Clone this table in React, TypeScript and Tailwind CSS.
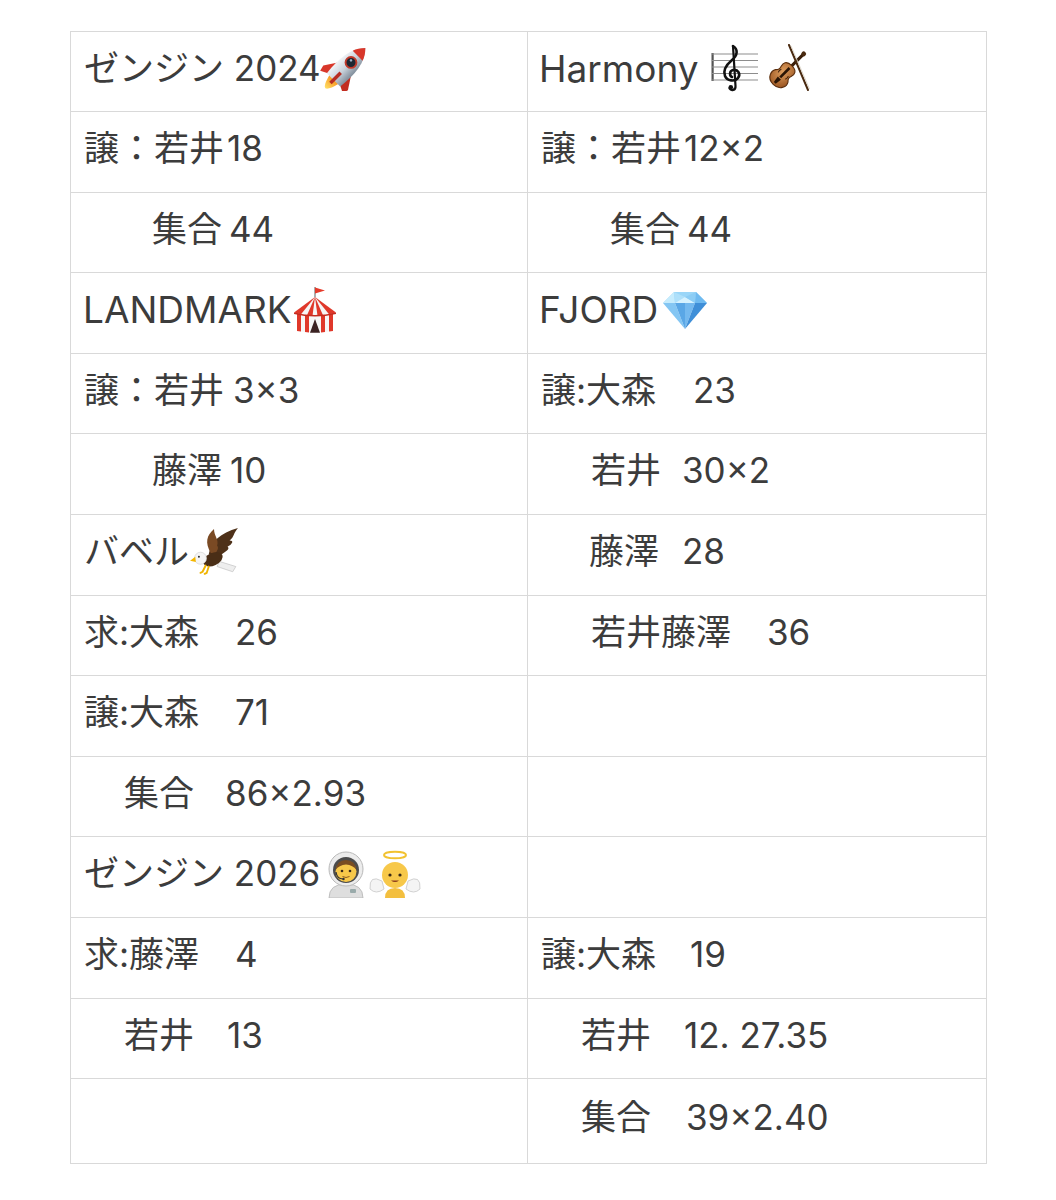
import React from "react";

type Seg = { w?: string; c: React.ReactNode };
type Cell = { pl: string; segs: Seg[] } | null;
type Row = { h: string; l: Cell; r: Cell };

function Rocket() {
  return (
    <svg viewBox="9 7 31 31" className="w-[47px] h-[45px] shrink-0">
      <defs>
        <linearGradient id="rb" x1="0" x2="1" y1="0" y2="0">
          <stop offset="0" stopColor="#f1f4f7" />
          <stop offset="0.5" stopColor="#c9d2db" />
          <stop offset="1" stopColor="#7f8c9a" />
        </linearGradient>
        <linearGradient id="rf" x1="0" x2="0" y1="0" y2="1">
          <stop offset="0" stopColor="#f7941d" />
          <stop offset="1" stopColor="#ffe066" />
        </linearGradient>
      </defs>
      <g transform="rotate(45 24 24)">
        <path d="M19.5 32 Q24 50 28.5 32 Z" fill="url(#rf)" />
        <path d="M18.5 21 L12 31 L13 35 L19 32 Z" fill="#d8372a" />
        <path d="M29.5 21 L36 31 L35 35 L29 32 Z" fill="#c22d21" />
        <path d="M24 2 C31 9 32 20 30.5 33 L17.5 33 C16 20 17 9 24 2 Z" fill="url(#rb)" />
        <path d="M24 2 C26.5 4.5 28 7 28.8 9.5 L19.2 9.5 C20 7 21.5 4.5 24 2 Z" fill="#d8372a" />
        <circle cx="24" cy="16" r="4.4" fill="#c0392b" />
        <circle cx="24" cy="16" r="3.1" fill="#1d2733" />
        <circle cx="23" cy="15" r="0.9" fill="#9fb3c8" />
        <rect x="22.8" y="26" width="2.4" height="10" fill="#b82d22" />
      </g>
    </svg>
  );
}

function Score() {
  return (
    <svg viewBox="0 0 48 48" className="w-[48px] h-[48px] shrink-0">
      <rect x="0.5" y="9" width="2.2" height="28" fill="#555" />
      {[10, 16.5, 23, 29.5, 36].map((y) => (
        <line key={y} x1="1" x2="47" y1={y} y2={y} stroke="#8d8d8d" strokeWidth="1.2" />
      ))}
      <path
        d="M22 2 C27 5 27 11 21 16 C14 22 12 27 14 32 C16 37 24 38 27 34 C30 30 27 25 22 26 C18 27 18.5 32 21 33"
        fill="none"
        stroke="#111"
        strokeWidth="2.6"
        strokeLinecap="round"
      />
      <path d="M22 2 L24.5 42 C25 46.5 20 47 18.5 44.5" fill="none" stroke="#111" strokeWidth="2.2" strokeLinecap="round" />
      <circle cx="19.8" cy="43.2" r="2.3" fill="#111" />
    </svg>
  );
}

function Violin() {
  return (
    <svg viewBox="0 0 48 48" className="w-[48px] h-[48px] shrink-0">
      <defs>
        <radialGradient id="vg" cx="0.4" cy="0.4" r="0.7">
          <stop offset="0" stopColor="#e0a060" />
          <stop offset="1" stopColor="#9a5420" />
        </radialGradient>
      </defs>
      <g transform="translate(-4 4) rotate(45 24 24) translate(-2 -4) scale(1.1)">
        <rect x="22.6" y="1" width="2.8" height="22" rx="1" fill="#3a1f0a" />
        <circle cx="24" cy="1.8" r="2.2" fill="#4a2a10" />
        <path
          d="M24 17 C17 17 16.5 21 17.5 24 C18.5 27 18 28 16 30 C14 33 15 41 24 41 C33 41 34 33 32 30 C30 28 29.5 27 30.5 24 C31.5 21 31 17 24 17 Z"
          fill="url(#vg)"
          stroke="#5a2d0c"
          strokeWidth="1"
        />
        <rect x="22.8" y="20" width="2.4" height="12" fill="#2a1505" />
        <path d="M22 33 L26 33 L25.2 39 L22.8 39 Z" fill="#2a1505" />
        <path d="M19.5 26 q-1 2 0 4 M28.5 26 q1 2 0 4" stroke="#3a1f0a" strokeWidth="0.9" fill="none" />
      </g>
      <line x1="24" y1="1" x2="43" y2="46" stroke="#4a2a10" strokeWidth="2" strokeLinecap="round" />
      <line x1="26" y1="2" x2="44.5" y2="45" stroke="#d9d2c5" strokeWidth="0.9" />
    </svg>
  );
}

function Circus() {
  return (
    <svg viewBox="2 0 44 48" className="w-[46px] h-[48px] shrink-0">
      <line x1="24" y1="1" x2="24" y2="12" stroke="#777" strokeWidth="1.2" />
      <path d="M24 1.5 L34 4.5 L24 7.5 Z" fill="#e53a2a" />
      <path d="M6 27 L6 45 Q24 47.5 42 45 L42 27 Q24 31 6 27 Z" fill="#f6f6f6" />
      <path d="M6 27 L10 28 L10 45.6 L6 45 Z" fill="#e0382a" />
      <path d="M14 28.8 L18 29.4 L18 46.4 L14 46.1 Z" fill="#e0382a" />
      <path d="M30 29.4 L34 28.8 L34 46.1 L30 46.4 Z" fill="#e0382a" />
      <path d="M38 28 L42 27 L42 45 L38 45.6 Z" fill="#e0382a" />
      <path d="M19 46.8 L24 33 L29 46.8 Z" fill="#3b2222" />
      <path d="M24 11 L3 26.5 Q24 31.5 45 26.5 Z" fill="#f6f6f6" />
      <path d="M24 11 L3 26.5 Q6.5 27.6 10 28.2 Z" fill="#e0382a" />
      <path d="M24 11 L16 29.3 Q19.5 29.7 21.5 29.8 Z" fill="#e0382a" />
      <path d="M24 11 L26.5 29.8 Q29 29.7 32 29.3 Z" fill="#e0382a" />
      <path d="M24 11 L38 28.2 Q41.5 27.6 45 26.5 Z" fill="#e0382a" />
      <path d="M3 26.5 Q24 31.5 45 26.5 L45 28 Q24 33 3 28 Z" fill="#c42c20" />
    </svg>
  );
}

function Gem() {
  return (
    <svg viewBox="0 0 48 40" className="w-[48px] h-[40px] shrink-0">
      <polygon points="13,2 35,2 46,13 2,13" fill="#9ad6f8" />
      <polygon points="13,2 2,13 14,13" fill="#c6ecfd" />
      <polygon points="13,2 14,13 24,7" fill="#aee0fa" />
      <polygon points="24,7 14,13 34,13" fill="#d6f2ff" />
      <polygon points="35,2 24,7 34,13" fill="#8ccdf5" />
      <polygon points="35,2 34,13 46,13" fill="#6fbaf0" />
      <polygon points="2,13 14,13 24,39" fill="#84c6f3" />
      <polygon points="14,13 24,13 24,39" fill="#5aa7e6" />
      <polygon points="24,13 34,13 24,39" fill="#74b9ef" />
      <polygon points="34,13 46,13 24,39" fill="#3f8fd8" />
    </svg>
  );
}

function Eagle() {
  return (
    <svg viewBox="0 0 50 48" className="w-[52px] h-[50px] shrink-0">
      <path d="M20 26 C22 14 31 6 48 1 C43 7 45 9 40 13 C45 13 42 17 38 19 C41 21 36 24 31 27 Z" fill="#4e3119" />
      <path d="M22 25 C16 15 18 8 25 2 C25 9 30 12 28 18 C30 20 28 23 26 26 Z" fill="#7a4a24" />
      <path d="M30 33 L46 38 L43 43 L28 38 Z" fill="#eeeeee" stroke="#bbb" strokeWidth="0.6" />
      <ellipse cx="24" cy="31" rx="10" ry="6" transform="rotate(-25 24 31)" fill="#4a2e16" />
      <circle cx="12" cy="30" r="5.8" fill="#f5f5f5" stroke="#cfcfcf" strokeWidth="0.6" />
      <path d="M7 28.5 L2 32.5 L7.5 33.5 Z" fill="#f5b700" />
      <circle cx="10.5" cy="28.6" r="0.9" fill="#222" />
      <path d="M17 37 L14 43 M20 38 L18 44 M14 43 l-2 1 M18 44 l-2 1" stroke="#f0b400" strokeWidth="1.8" strokeLinecap="round" />
    </svg>
  );
}

function Astronaut() {
  return (
    <svg viewBox="0 0 46 48" className="w-[46px] h-[48px] shrink-0">
      <path d="M6 48 Q6 34 23 34 Q40 34 40 48 Z" fill="#dedede" stroke="#b5b5b5" strokeWidth="0.8" />
      <rect x="27" y="39" width="6" height="4" rx="1" fill="#9aa" />
      <circle cx="23" cy="19" r="17" fill="#ececec" stroke="#b9b9b9" strokeWidth="1" />
      <circle cx="23" cy="20" r="13" fill="#4c4c4c" />
      <circle cx="23" cy="21.5" r="10.5" fill="#f7c84a" />
      <path d="M12.5 20 Q14 10 23 10 Q32 10 33.5 20 Q30 15 23 14.5 Q16 15 12.5 20 Z" fill="#7a4d22" />
      <circle cx="19" cy="21" r="1.3" fill="#3a2a18" />
      <circle cx="27" cy="21" r="1.3" fill="#3a2a18" />
      <path d="M19.5 26.5 Q23 28.5 26.5 26.5" stroke="#8a5a20" strokeWidth="1" fill="none" />
      <path d="M13 22 Q14 29 20 29" stroke="#333" strokeWidth="1.2" fill="none" />
      <circle cx="20.5" cy="29" r="1.2" fill="#333" />
    </svg>
  );
}

function Angel() {
  return (
    <svg viewBox="0 0 56 48" className="w-[56px] h-[48px] shrink-0">
      <ellipse cx="28" cy="5" rx="11" ry="3.3" fill="none" stroke="#f2c230" strokeWidth="2" />
      <path d="M15 31 Q2 24 3 39 Q9 45 17 39 Z" fill="#f4f4f4" stroke="#c6c6c6" strokeWidth="0.8" />
      <path d="M41 31 Q54 24 53 39 Q47 45 39 39 Z" fill="#f4f4f4" stroke="#c6c6c6" strokeWidth="0.8" />
      <path d="M18 48 Q18 38 28 38 Q38 38 38 48 Z" fill="#f3bf3f" />
      <circle cx="28" cy="25" r="13" fill="#f7c84a" />
      <circle cx="23" cy="25" r="1.6" fill="#3a2a18" />
      <circle cx="33" cy="25" r="1.6" fill="#3a2a18" />
      <path d="M24 30.5 Q28 33.5 32 30.5 Z" fill="#8a3a1a" />
    </svg>
  );
}

function Big({ children }: { children: React.ReactNode }) {
  return <span className="text-[37px]">{children}</span>;
}

const rows: Row[] = [
  {
    h: "h-[80px]",
    l: { pl: "pl-[13px]", segs: [{ w: "w-[236px]", c: "ゼンジン 2024" }, { c: <Rocket /> }] },
    r: {
      pl: "pl-[11px]",
      segs: [{ w: "w-[172px]", c: <Big>Harmony</Big> }, { w: "w-[54px]", c: <Score /> }, { c: <Violin /> }],
    },
  },
  {
    h: "h-[81px]",
    l: { pl: "pl-[13px]", segs: [{ w: "w-[143px]", c: "譲：若井" }, { c: "18" }] },
    r: { pl: "pl-[13px]", segs: [{ w: "w-[143px]", c: "譲：若井" }, { c: "12×2" }] },
  },
  {
    h: "h-[80px]",
    l: { pl: "pl-[81px]", segs: [{ w: "w-[77px]", c: "集合" }, { c: "44" }] },
    r: { pl: "pl-[82px]", segs: [{ w: "w-[77px]", c: "集合" }, { c: "44" }] },
  },
  {
    h: "h-[81px]",
    l: { pl: "pl-[12px]", segs: [{ w: "w-[209px]", c: <Big>LANDMARK</Big> }, { c: <Circus /> }] },
    r: { pl: "pl-[11px]", segs: [{ w: "w-[122px]", c: <Big>FJORD</Big> }, { c: <Gem /> }] },
  },
  {
    h: "h-[80px]",
    l: { pl: "pl-[13px]", segs: [{ w: "w-[149px]", c: "譲：若井" }, { c: "3×3" }] },
    r: { pl: "pl-[13px]", segs: [{ w: "w-[152px]", c: "譲:大森" }, { c: "23" }] },
  },
  {
    h: "h-[81px]",
    l: { pl: "pl-[81px]", segs: [{ w: "w-[78px]", c: "藤澤" }, { c: "10" }] },
    r: { pl: "pl-[63px]", segs: [{ w: "w-[91px]", c: "若井" }, { c: "30×2" }] },
  },
  {
    h: "h-[81px]",
    l: { pl: "pl-[13px]", segs: [{ w: "w-[104px]", c: "バベル" }, { c: <Eagle /> }] },
    r: { pl: "pl-[61px]", segs: [{ w: "w-[93px]", c: "藤澤" }, { c: "28" }] },
  },
  {
    h: "h-[80px]",
    l: { pl: "pl-[13px]", segs: [{ w: "w-[151px]", c: "求:大森" }, { c: "26" }] },
    r: { pl: "pl-[63px]", segs: [{ w: "w-[176px]", c: "若井藤澤" }, { c: "36" }] },
  },
  {
    h: "h-[81px]",
    l: { pl: "pl-[13px]", segs: [{ w: "w-[151px]", c: "譲:大森" }, { c: "71" }] },
    r: null,
  },
  {
    h: "h-[80px]",
    l: { pl: "pl-[53px]", segs: [{ w: "w-[101px]", c: "集合" }, { c: "86×2.93" }] },
    r: null,
  },
  {
    h: "h-[81px]",
    l: {
      pl: "pl-[13px]",
      segs: [{ w: "w-[239px]", c: "ゼンジン 2026" }, { w: "w-[44px]", c: <Astronaut /> }, { c: <Angel /> }],
    },
    r: null,
  },
  {
    h: "h-[81px]",
    l: { pl: "pl-[13px]", segs: [{ w: "w-[151px]", c: "求:藤澤" }, { c: "4" }] },
    r: { pl: "pl-[13px]", segs: [{ w: "w-[149px]", c: "譲:大森" }, { c: "19" }] },
  },
  {
    h: "h-[80px]",
    l: { pl: "pl-[53px]", segs: [{ w: "w-[103px]", c: "若井" }, { c: "13" }] },
    r: { pl: "pl-[53px]", segs: [{ w: "w-[103px]", c: "若井" }, { c: "12. 27.35" }] },
  },
  {
    h: "h-[85px]",
    l: null,
    r: { pl: "pl-[53px]", segs: [{ w: "w-[105px]", c: "集合" }, { c: "39×2.40" }] },
  },
];

function CellView({ cell, wide }: { cell: Cell; wide: string }) {
  return (
    <div className={`${wide} h-full border-r border-[#d9d9d9] flex items-center pb-[7px] whitespace-nowrap ${cell ? cell.pl : ""}`}>
      {cell?.segs.map((s, i) => (
        <span key={i} className={`flex items-center shrink-0 ${s.w ?? ""}`}>
          {s.c}
        </span>
      ))}
    </div>
  );
}

export default function App() {
  return (
    <div className="w-[1056px] min-h-[1200px] bg-white pt-[31px] pl-[70px] font-[family-name:Inter,'Noto_Sans_CJK_JP',sans-serif] text-[35px] leading-none text-[#3c3c3c]">
      <div className="w-[917px] border-l border-t border-[#d9d9d9]">
        {rows.map((row, i) => (
          <div key={i} className={`flex border-b border-[#d9d9d9] ${row.h}`}>
            <CellView cell={row.l} wide="w-[457px]" />
            <CellView cell={row.r} wide="w-[459px]" />
          </div>
        ))}
      </div>
    </div>
  );
}
